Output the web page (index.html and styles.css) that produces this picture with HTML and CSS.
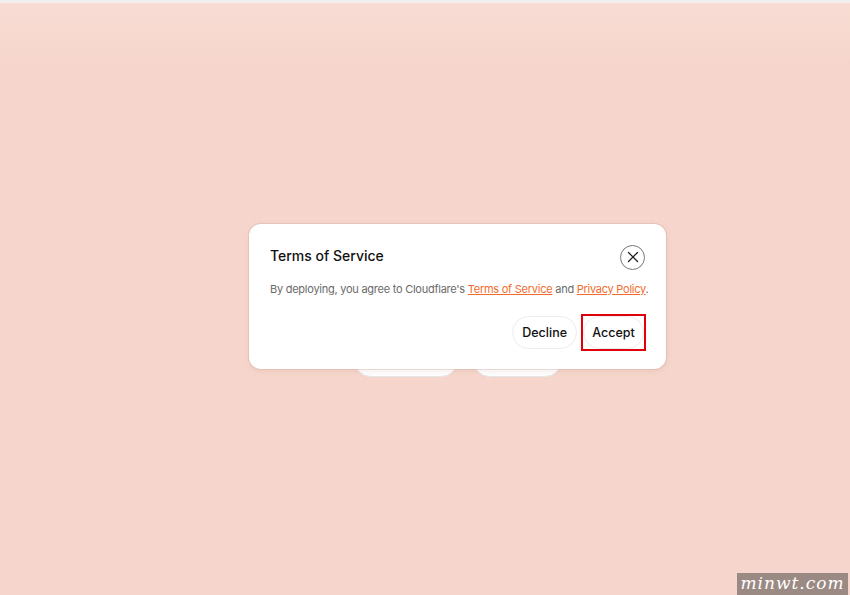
FILE: index.html
```html
<!DOCTYPE html>
<html lang="en">
<head>
  <meta charset="UTF-8">
  <title>Deploy</title>
  <link rel="stylesheet" href="styles.css">
</head>
<body>
  <div class="topbar"></div>

  <main class="canvas">
    <!-- page actions, covered by the dialog -->
    <div class="actions">
      <button class="pill wide">Deploy</button>
      <button class="pill">Cancel</button>
    </div>
  </main>

  <!-- terms dialog -->
  <div class="dialog" role="dialog" aria-labelledby="tos-title">
    <div class="dialog-head">
      <h2 id="tos-title">Terms of Service</h2>
      <button class="close" aria-label="Close">
        <svg width="12" height="12" viewBox="0 0 12 12">
          <path d="M1.5 1.5 L10.5 10.5 M10.5 1.5 L1.5 10.5" stroke="#222" stroke-width="1.3" stroke-linecap="round"/>
        </svg>
      </button>
    </div>
    <p class="dialog-text">By deploying, you agree to Cloudflare's <a href="#">Terms of Service</a> and <a href="#">Privacy Policy</a>.</p>
    <div class="dialog-foot">
      <button class="btn">Decline</button>
      <span class="marked"><button class="btn">Accept</button></span>
    </div>
  </div>

  <div class="stamp">minwt.com</div>
</body>
</html>
```

FILE: styles.css
```css
html, body { margin: 0; height: 100%; }
body {
  font-family: Inter, "Liberation Sans", sans-serif;
  background: #f6d6cc;
  overflow: hidden;
  position: relative;
}
.topbar { height: 3px; background: #f2f0ee; }
.canvas {
  height: 592px;
  background-color: #f6d6cc;
  background-image:
    linear-gradient(#f8dcd3, rgba(246, 214, 204, 0) 60px),
    radial-gradient(rgba(255, 255, 255, 0.16) 0.8px, transparent 1.2px);
  background-size: 100% 100%, 16px 16px;
  display: flex;
  justify-content: center;
  padding-left: 65px;
  box-sizing: border-box;
}
.actions {
  display: flex;
  gap: 15px;
  margin-top: 341px;
}
.pill {
  width: 89px;
  height: 33px;
  border-radius: 17px;
  border: 1px solid #e6e6e6;
  background: #fff;
  font: 500 12px Inter, sans-serif;
  color: #fff;
}
.pill.wide { width: 104px; }

.dialog {
  position: absolute;
  left: 249px;
  top: 224px;
  width: 417px;
  height: 145px;
  box-sizing: border-box;
  padding: 20px 20px 18px 21px;
  background: #fff;
  border-radius: 12px;
  box-shadow: 0 0 0 1px rgba(210, 170, 160, 0.35), 0 2px 6px rgba(150, 90, 70, 0.12);
}
.dialog-head {
  display: flex;
  justify-content: space-between;
  align-items: center;
  height: 26px;
}
.dialog-head h2 {
  margin: -4px 0 0;
  font-size: 14px;
  font-weight: 500;
  color: #111;
}
.close {
  width: 25px;
  height: 25px;
  margin-top: 0;
  margin-right: 1px;
  border-radius: 50%;
  border: 1px solid #777;
  background: #fff;
  padding: 0;
  display: flex;
  align-items: center;
  justify-content: center;
}
.dialog-text {
  margin: 12px 0 0;
  font-size: 11px;
  letter-spacing: -0.25px;
  color: #6a6a6a;
  white-space: nowrap;
}
.dialog-text a { color: #f36b2c; text-decoration: underline; }
.dialog-foot {
  display: flex;
  justify-content: flex-end;
  align-items: center;
  gap: 4px;
  margin-top: 18px;
}
.btn {
  height: 33px;
  padding: 0 9px;
  border-radius: 17px;
  border: 1px solid #ececec;
  background: #fff;
  font: 500 12.5px Inter, sans-serif;
  color: #111;
}
.marked {
  display: flex;
  border: 2px solid #e0000b;
  margin-right: 0;
}
.marked .btn { width: 61px; padding: 0; }

.stamp {
  position: absolute;
  right: 2px;
  bottom: 0;
  width: 111px;
  height: 22px;
  background: #9b8a83;
  color: #fff;
  font: italic 17px "DejaVu Serif", serif;
  letter-spacing: 1px;
  text-align: center;
  line-height: 21px;
}
```
